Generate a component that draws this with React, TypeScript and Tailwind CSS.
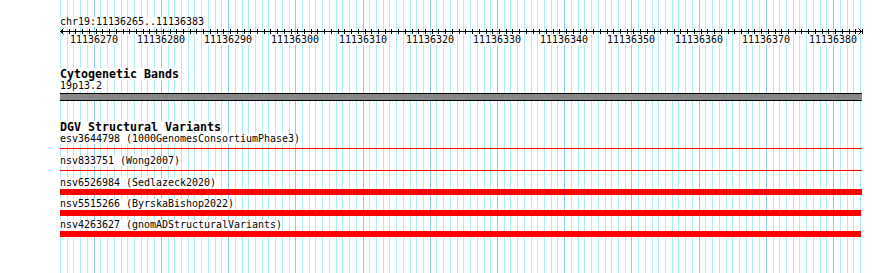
import React from "react";

const START = 11136265;
const X0 = 60;
const SCALE = 800 / 119;

const lines = Array.from({ length: 120 }, (_, k) => ({
  x: X0 + Math.round(k * SCALE),
  dark: (START + k) % 10 === 0,
  pos: START + k,
}));

const labels = lines.filter((l) => l.dark);

const items = [
  { text: "esv3644798 (1000GenomesConsortiumPhase3)", thick: false, w: 802, h: 22 },
  { text: "nsv833751 (Wong2007)", thick: false, w: 802, h: 22 },
  { text: "nsv6526984 (Sedlazeck2020)", thick: true, w: 802, h: 21 },
  { text: "nsv5515266 (ByrskaBishop2022)", thick: true, w: 801, h: 21 },
  { text: "nsv4263627 (gnomADStructuralVariants)", thick: true, w: 801, h: 22 },
];

function Txt({ children }: { children: React.ReactNode }) {
  return (
    <div className="h-[10px] text-[9.97px] leading-[10px]">
      <span className="inline-block h-[10px] align-top bg-white">{children}</span>
    </div>
  );
}

function Title({ children }: { children: React.ReactNode }) {
  return (
    <div className="h-[12px] text-[11.63px] leading-[12px] font-bold">
      <span className="inline-block h-[12px] align-top bg-white">{children}</span>
    </div>
  );
}

export default function App() {
  return (
    <div className="relative w-[890px] h-[273px] bg-white overflow-hidden font-['DejaVu_Sans_Mono','Liberation_Mono',monospace] text-black">
      <svg className="absolute left-0 top-0" width={890} height={273} shapeRendering="crispEdges">
        {lines.map((l) => (
          <rect
            key={l.pos}
            x={l.x}
            y={0}
            width={1}
            height={273}
            fill={l.dark ? "#8ccbef" : "#aeeef0"}
          />
        ))}
      </svg>

      <div className="relative flex flex-col pl-[60px] pt-[17px]">
        <Txt>chr19:11136265..11136383</Txt>

        <svg width={803} height={8} className="block">
          <rect x={0} y={4} width={802} height={1} fill="#000" shapeRendering="crispEdges" />
          {lines.map((l) => (
            <rect key={l.pos} x={l.x - X0 + 2} y={2} width={1} height={5} fill="#000" shapeRendering="crispEdges" />
          ))}
          <path d="M0.5 4.5 L3.5 1.5 M0.5 4.5 L3.5 7.5" stroke="#000" strokeWidth={1} fill="none" />
          <path d="M801.5 4.5 L798.5 1.5 M801.5 4.5 L798.5 7.5" stroke="#000" strokeWidth={1} fill="none" />
        </svg>

        <div className="relative h-[10px] text-[9.97px] leading-[10px]">
          {labels.map((l) => (
            <span
              key={l.pos}
              className="absolute top-0 h-[10px] w-[48px] text-center bg-white"
              style={{ left: l.x - X0 - 24 }}
            >
              {l.pos}
            </span>
          ))}
        </div>

        <div className="h-[23px]" />

        <Title>Cytogenetic Bands</Title>
        <div className="h-[1px]" />
        <Txt>19p13.2</Txt>
        <div className="h-[2px]" />
        <div className="w-[802px] h-[8px] bg-[#888888] border-y border-black" />

        <div className="h-[20px]" />

        <Title>DGV Structural Variants</Title>
        <div className="h-[1px]" />

        {items.map((it) => (
          <div key={it.text} className="flex flex-col" style={{ height: it.h }}>
            <Txt>{it.text}</Txt>
            {it.thick ? (
              <div className="mt-[1px] h-[6px] bg-[#ff0000]" style={{ width: it.w }} />
            ) : (
              <div className="mt-[4px] h-[1px] bg-[#ff0000]" style={{ width: it.w }} />
            )}
          </div>
        ))}
      </div>
    </div>
  );
}
